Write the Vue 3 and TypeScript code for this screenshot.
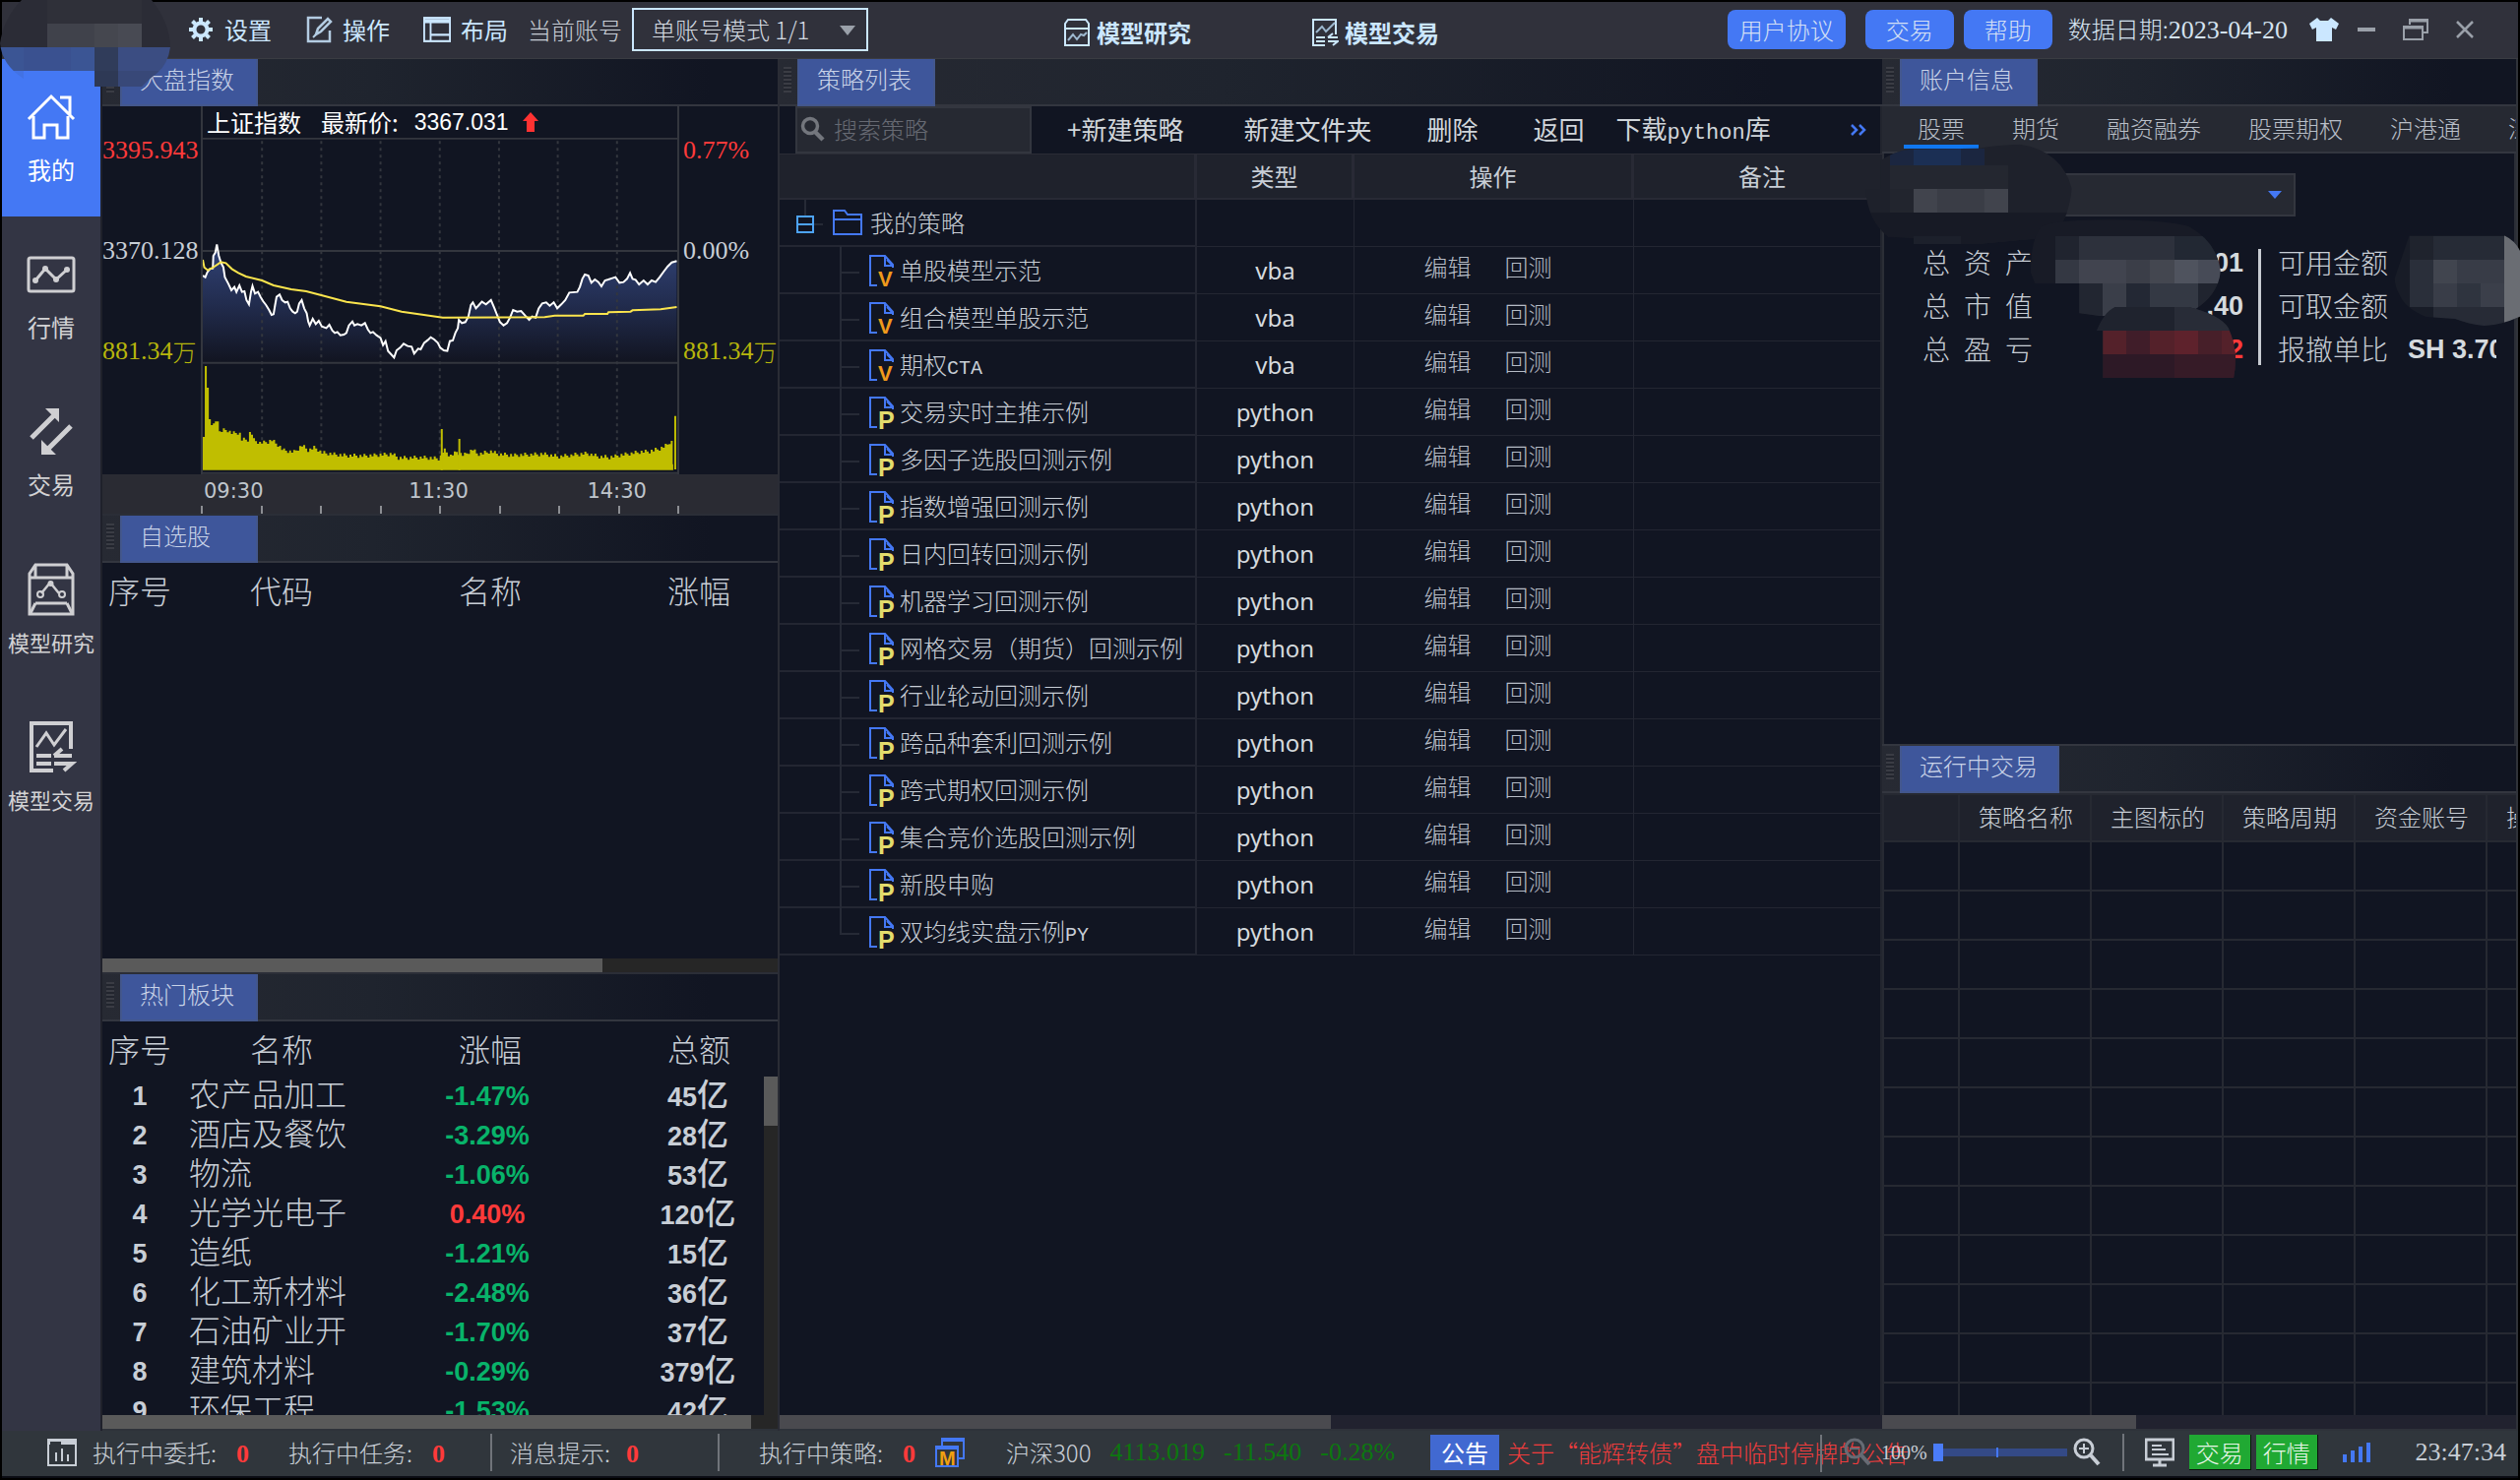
<script setup lang="ts">
import { ref } from 'vue'

interface Strategy { name: string; latin?: string; kind: 'vba' | 'python' }
interface Sector { id: number; name: string; change: string; amount: number }

const accountMode = ref('单账号模式 1/1')
const keyword = ref('')
const zoomLevel = ref(0)

const navItems = [
  { id: 'home', label: '我的' },
  { id: 'quote', label: '行情' },
  { id: 'trade', label: '交易' },
  { id: 'research', label: '模型研究' },
  { id: 'model', label: '模型交易' },
]

const strategies: Strategy[] = [
  { name: '单股模型示范', kind: 'vba' },
  { name: '组合模型单股示范', kind: 'vba' },
  { name: '期权', latin: 'CTA', kind: 'vba' },
  { name: '交易实时主推示例', kind: 'python' },
  { name: '多因子选股回测示例', kind: 'python' },
  { name: '指数增强回测示例', kind: 'python' },
  { name: '日内回转回测示例', kind: 'python' },
  { name: '机器学习回测示例', kind: 'python' },
  { name: '网格交易（期货）回测示例', kind: 'python' },
  { name: '行业轮动回测示例', kind: 'python' },
  { name: '跨品种套利回测示例', kind: 'python' },
  { name: '跨式期权回测示例', kind: 'python' },
  { name: '集合竞价选股回测示例', kind: 'python' },
  { name: '新股申购', kind: 'python' },
  { name: '双均线实盘示例', latin: 'PY', kind: 'python' },
]

const sectors: Sector[] = [
  { id: 1, name: '农产品加工', change: '-1.47%', amount: 45 },
  { id: 2, name: '酒店及餐饮', change: '-3.29%', amount: 28 },
  { id: 3, name: '物流', change: '-1.06%', amount: 53 },
  { id: 4, name: '光学光电子', change: '0.40%', amount: 120 },
  { id: 5, name: '造纸', change: '-1.21%', amount: 15 },
  { id: 6, name: '化工新材料', change: '-2.48%', amount: 36 },
  { id: 7, name: '石油矿业开', change: '-1.70%', amount: 37 },
  { id: 8, name: '建筑材料', change: '-0.29%', amount: 379 },
  { id: 9, name: '环保工程', change: '-1.53%', amount: 42 },
]

const accountTabs = ['股票', '期货', '融资融券', '股票期权', '沪港通', '深港通']
const runningColumns = ['', '策略名称', '主图标的', '策略周期', '资金账号', '操作类型']

const gridX = [522, 640, 758, 876, 994, 1111, 1229]

const pricePoints =
  '404,540 409,545 413,530 418,520 424,518 425,480 429,470 432,445 436,480 440,500 445,515 448,545 455,565 461,585 467,575 471,590 477,570 482,590 487,588 491,615 496,628 500,590 503,572 508,595 514,590 519,605 524,618 530,630 536,645 541,660 545,658 548,630 551,605 557,598 562,615 568,622 573,620 578,640 583,650 588,655 592,650 596,625 601,615 606,640 611,655 614,680 617,692 623,672 629,688 635,678 641,695 650,700 656,690 662,708 667,715 672,712 678,722 685,720 690,715 695,692 702,680 706,692 712,688 720,692 727,685 733,705 738,715 743,712 750,722 758,730 763,752 768,740 773,770 779,780 785,790 790,768 797,760 804,748 812,755 820,757 825,778 833,763 838,765 845,745 852,737 858,728 865,735 872,745 877,760 884,768 891,770 896,740 902,738 907,715 912,700 914,675 920,685 927,682 933,665 938,630 942,622 948,640 954,630 960,620 968,628 978,615 985,640 990,660 996,682 1003,692 1010,685 1016,668 1022,645 1030,650 1038,648 1046,662 1054,675 1060,665 1067,668 1073,640 1080,625 1088,622 1095,632 1103,622 1110,640 1118,628 1126,615 1134,592 1150,590 1155,575 1160,550 1165,537 1172,540 1178,562 1185,552 1192,560 1198,573 1205,555 1212,552 1220,548 1226,545 1234,562 1242,560 1249,550 1255,532 1260,550 1266,553 1273,567 1282,555 1290,567 1298,555 1306,560 1314,545 1322,528 1330,512 1338,500 1348,496'

const averagePoints =
  '404,492 407,515 414,524 424,516 440,499 450,502 462,520 475,532 490,543 522,555 545,570 580,582 610,588 640,600 690,620 758,634 800,650 882,668 1085,667 1105,662 1162,662 1165,657 1210,657 1212,652 1256,650 1260,646 1316,643 1348,636'

const volumeEnvelope: [number, number][] = [
  [404, 1032], [407, 1032], [408, 816], [411, 816], [413, 948], [416, 978], [421, 1000], [426, 985], [434, 985], [436, 1015],
  [450, 1010], [462, 1022], [475, 1018], [480, 1040], [492, 1040], [496, 1020], [500, 1022], [504, 1042], [516, 1050], [530, 1048],
  [540, 1042], [555, 1060], [562, 1072], [584, 1078], [600, 1058], [612, 1072], [625, 1064], [640, 1080], [680, 1088],
  [720, 1090], [780, 1084], [792, 1096], [840, 1095], [874, 1098], [882, 1070], [895, 1090], [908, 1078], [922, 1088],
  [940, 1070], [950, 1085], [976, 1076], [990, 1084], [1020, 1088], [1080, 1084], [1110, 1092], [1168, 1082], [1190, 1092],
  [1212, 1094], [1240, 1086], [1270, 1078], [1292, 1076], [1312, 1068], [1326, 1058], [1334, 1045], [1337, 1048],
]

function envelopeAt(x: number): number {
  for (let i = 1; i < volumeEnvelope.length; i++) {
    const [x0, y0] = volumeEnvelope[i - 1]
    const [x1, y1] = volumeEnvelope[i]
    if (x <= x1) return y0 + ((y1 - y0) * (x - x0)) / (x1 - x0)
  }
  return 1048
}

function buildVolumePath(): string {
  let d = 'M404 1133'
  for (let i = 0; i < 240; i++) {
    const x = 404 + i * 4
    if (x > 1336) break
    const wobble = x < 440 ? 0 : ((i * 7) % 5) * 3 - 6
    const y = Math.round(envelopeAt(x) + wobble)
    d += `V${y}H${x + 4}`
  }
  return d + 'V1115H1341V1133Z'
}

const volumePath = buildVolumePath()
</script>

<template>
  <div class="app">
    <header class="topbar">
      <nav class="menu">
        <button type="button" class="menu-btn">
          <svg width="28" height="28" viewBox="0 0 28 28"><circle cx="14" cy="14" r="6.5" fill="none" stroke="#cbe7ff" stroke-width="4" /><path d="M14 2v4M14 22v4M2 14h4M22 14h4M5.500 5.500l3 3M19.500 19.500l3 3M22.500 5.500l-3 3M8.500 19.500l-3 3" stroke="#cbe7ff" stroke-width="4" /></svg>
          设置
        </button>
        <button type="button" class="menu-btn">
          <svg width="28" height="28" viewBox="0 0 28 28" fill="none" stroke="#b3cce2"><path d="M17 2H3v24h22V15" stroke-width="2.500" /><path d="M11 19l2-6L23 3l3 3-10 10z" stroke-width="2.500" /><path d="M8 22l3-3" stroke-width="2" /></svg>
          操作
        </button>
        <button type="button" class="menu-btn">
          <svg width="28" height="28" viewBox="0 0 30 26" preserveAspectRatio="none" fill="none" stroke="#cbe7ff"><rect x="1" y="2" width="28" height="22" stroke-width="2" /><path d="M1 5h28" stroke-width="4" /><path d="M8 6v18M8 18h21" stroke-width="2" /></svg>
          布局
        </button>
      </nav>
      <label class="account-label" for="mode">当前账号</label>
      <div class="mode-box">
        <select id="mode" v-model="accountMode" class="mode-select">
          <option>单账号模式 1/1</option>
        </select>
        <svg class="mode-arrow" width="16" height="10" viewBox="0 0 16 10"><path d="M0 0h16L8 10z" fill="#9aa0a9" /></svg>
      </div>
      <div class="model-links">
        <a href="#research" class="model-link">
          <svg width="28" height="28" viewBox="0 0 28 28" fill="none" stroke="#cbe7ff" stroke-width="2"><path d="M2 10V5l3-4h18l3 4v5M2 10h24v17H2z" /><path d="M5 22l5-6 4 5 4-5 3 1 3-3" stroke="#9db8cf" /></svg>
          模型研究
        </a>
        <a href="#model" class="model-link">
          <svg width="28" height="28" viewBox="0 0 28 28" fill="none" stroke="#cbe7ff" stroke-width="2"><path d="M14 27H2V1h23v15" /><path d="M5 14l6-6 4 5 9-9" stroke="#9db8cf" /><path d="M5 19h9M5 23h9M17 19h10M17 19l5-4M17 23h10l-5 4" /></svg>
          模型交易
        </a>
      </div>
      <div class="top-actions">
        <button type="button" class="pill wide">用户协议</button>
        <button type="button" class="pill">交易</button>
        <button type="button" class="pill last">帮助</button>
        <span class="data-date">数据日期:<span class="num">2023-04-20</span></span>
        <button type="button" class="icon-btn shirt" aria-label="换肤">
          <svg width="30" height="26" viewBox="0 0 30 26"><path d="M8 1l3 3h8l3-3 8 6-3 6-4-2v14H7V11l-4 2-3-6z" fill="#cbe7ff" /></svg>
        </button>
        <button type="button" class="icon-btn" aria-label="最小化">
          <svg width="20" height="20" viewBox="0 0 20 20"><path d="M1 10h18" stroke="#9aa0a9" stroke-width="4" /></svg>
        </button>
        <button type="button" class="icon-btn" aria-label="还原">
          <svg width="28" height="24" viewBox="0 0 28 24" fill="none" stroke="#9aa0a9" stroke-width="2"><path d="M8 7V2h18v13h-5" /><path d="M8 3h18" stroke-width="3" /><rect x="2" y="9" width="19" height="13" /><path d="M2 10h19" stroke-width="3" /></svg>
        </button>
        <button type="button" class="icon-btn" aria-label="关闭">
          <svg width="20" height="20" viewBox="0 0 20 20"><path d="M2 2l16 16M18 2L2 18" stroke="#9aa0a9" stroke-width="2.500" /></svg>
        </button>
      </div>
    </header>

    <div class="body">
      <aside class="sidebar">
        <button v-for="item in navItems" :key="item.id" type="button" class="nav-item" :class="{ active: item.id === 'home', small: item.label.length > 2 }">
          <svg v-if="item.id === 'home'" width="52" height="52" viewBox="0 0 52 52" fill="none" stroke="#fff" stroke-width="3"><path d="M3 28L26 5l9 9M35 6h10v18M35 14l14 14" /><path d="M8 25v22h11V34h13v13h11V25" /></svg>
          <svg v-else-if="item.id === 'quote'" width="52" height="52" viewBox="0 0 52 52" fill="none" stroke="#cfcfd2"><rect x="3" y="9" width="46" height="34" rx="2" stroke-width="3" /><path d="M10 32l10-12 11 11 11-10" stroke-width="3" /><g fill="#cfcfd2" stroke="none"><circle cx="10" cy="32" r="3" /><circle cx="20" cy="20" r="3" /><circle cx="31" cy="31" r="3" /><circle cx="42" cy="21" r="3" /></g></svg>
          <svg v-else-if="item.id === 'trade'" width="52" height="52" viewBox="0 0 52 52"><path d="M6 32L32 6M20 46l26-26" stroke="#cfcfd2" stroke-width="5" /><path d="M20 2h14v14zM16 34v15h15z" fill="#cfcfd2" /></svg>
          <svg v-else-if="item.id === 'research'" width="52" height="56" viewBox="0 0 52 56" fill="none" stroke="#cfcfd2" stroke-width="3"><path d="M4 16V12l6-9h32l6 9v4M4 16h44v37H4zM10 4v11M42 4v11" /><path d="M10 42h32M10 42l-5 10M42 42l5 10" /><path d="M16 32l9-11 9 11" stroke-width="2.500" /><circle cx="15" cy="33" r="3" stroke-width="2" /><circle cx="25.500" cy="22" r="2" stroke-width="2" /><circle cx="37" cy="33" r="3" stroke-width="2" /></svg>
          <svg v-else width="52" height="56" viewBox="0 0 52 56" fill="none" stroke="#cfcfd2" stroke-width="4"><path d="M28 52H6V4h40v26" /><path d="M11 28l10-14 8 12 12-16" stroke-width="3" /><path d="M11 37h15M29 37h18M29 37l8-7M11 45h15M29 45h18l-8 7" /></svg>
          <span>{{ item.label }}</span>
        </button>
      </aside>

      <section class="column left">
        <div class="panel-head"><i class="grip"></i><h2 class="tab">大盘指数</h2></div>
        <div class="chart">
          <div class="axis"><span class="up">3395.943</span><span>3370.128</span><span class="vol">881.34<b>万</b></span></div>
          <div class="plot">
            <div class="plot-title">
              <span>上证指数</span><span>最新价:</span><span class="price">3367.031</span>
              <svg width="16" height="20" viewBox="0 0 16 20"><path d="M8 0l8 9h-4v11H4V9H0z" fill="#ff3232" /></svg>
            </div>
            <svg class="plot-svg" viewBox="404 120 945 1026" preserveAspectRatio="none">
              <defs>
                <linearGradient id="fill" gradientUnits="userSpaceOnUse" x1="0" y1="470" x2="0" y2="800">
                  <stop offset="0" stop-color="#2f4072" /><stop offset="0.500" stop-color="#212b4c" /><stop offset="1" stop-color="#121522" />
                </linearGradient>
              </defs>
              <polygon :points="`404,805 ${pricePoints} 1348,805`" fill="url(#fill)" />
              <g stroke="#33363e" stroke-width="2">
                <path v-for="x in gridX" :key="x" :d="`M${x} 130V1133`" stroke-dasharray="3 4" vector-effect="non-scaling-stroke" />
                <path d="M404 122H1349M404 465H1349M404 806H1349M404 1142H1349" vector-effect="non-scaling-stroke" />
              </g>
              <path :d="volumePath" fill="#c0be00" />
              <path d="M880 1133V1008M915 1133V1038M1345 1131V968" stroke="#c0be00" stroke-width="2" vector-effect="non-scaling-stroke" />
              <polyline :points="pricePoints" fill="none" stroke="#fff" stroke-width="2" vector-effect="non-scaling-stroke" />
              <polyline :points="averagePoints" fill="none" stroke="#fbe54d" stroke-width="2" vector-effect="non-scaling-stroke" />
            </svg>
          </div>
          <div class="axis right"><span class="up">0.77%</span><span>0.00%</span><span class="vol">881.34<b>万</b></span></div>
        </div>
        <div class="time-axis">
          <div class="time-inner">
            <div class="times"><span>09:30</span><span class="mid">11:30</span><span class="late">14:30</span></div>
            <div class="ticks"><i v-for="n in 9" :key="n"></i></div>
          </div>
        </div>

        <div class="panel-head next"><i class="grip"></i><h2 class="tab">自选股</h2></div>
        <div class="watch">
          <table class="quote-table">
            <thead><tr><th class="c1">序号</th><th class="c2">代码</th><th class="c3">名称</th><th class="c4">涨幅</th></tr></thead>
          </table>
        </div>
        <div class="hscroll gray"><i class="w74"></i></div>

        <div class="panel-head next"><i class="grip"></i><h2 class="tab">热门板块</h2></div>
        <table class="quote-table">
          <thead><tr><th class="c1">序号</th><th class="c2">名称</th><th class="c3">涨幅</th><th class="c4">总额</th></tr></thead>
        </table>
        <div class="hot">
          <table class="quote-table rows">
            <tbody>
              <tr v-for="s in sectors" :key="s.id">
                <td class="c1 digits">{{ s.id }}</td>
                <td class="c2 name">{{ s.name }}</td>
                <td class="c3 digits" :class="s.change.startsWith('-') ? 'down' : 'up'">{{ s.change }}</td>
                <td class="c4 digits">{{ s.amount }}<span class="unit">亿</span></td>
              </tr>
            </tbody>
          </table>
          <div class="vscroll"><i></i></div>
        </div>
        <div class="hscroll gray"><i class="w96"></i></div>
      </section>

      <section class="column middle">
        <div class="panel-head"><i class="grip"></i><h2 class="tab">策略列表</h2></div>
        <div class="toolbar">
          <label class="search">
            <svg width="26" height="26" viewBox="0 0 26 26" fill="none" stroke="#73767d"><circle cx="10" cy="10" r="7.500" stroke-width="3.500" /><path d="M15 16l8 8" stroke-width="4.500" /></svg>
            <input v-model="keyword" type="text" placeholder="搜索策略" aria-label="搜索策略" />
          </label>
          <div class="tools">
            <button type="button" class="t1">+新建策略</button>
            <button type="button" class="t2">新建文件夹</button>
            <button type="button" class="t3">删除</button>
            <button type="button" class="t3">返回</button>
            <button type="button" class="t4">下载<span class="code">python</span>库</button>
          </div>
          <button type="button" class="more" aria-label="更多">
            <svg width="16" height="12" viewBox="0 0 16 12" fill="none" stroke="#4478f4" stroke-width="2.500"><path d="M1 1l5 5-5 5M9 1l5 5-5 5" /></svg>
          </button>
        </div>
        <table class="strategy">
          <colgroup><col class="sc1" /><col class="sc2" /><col class="sc3" /><col /></colgroup>
          <thead><tr><th></th><th>类型</th><th>操作</th><th class="note-head">备注</th></tr></thead>
          <tbody>
            <tr>
              <td>
                <div class="root">
                  <svg width="30" height="46" viewBox="0 0 30 46" fill="none"><path d="M10 0v16M18 25h10" stroke="#262a36" stroke-width="2" /><path d="M2 17h16v16H2zM2 25h16" stroke="#4da3f5" stroke-width="2" /></svg>
                  <svg width="30" height="26" viewBox="0 0 30 26" fill="none" stroke="#4478f4" stroke-width="2"><path d="M1 25V1h11l3 4h14v20zM1 10h28" /></svg>
                  <span>我的策略</span>
                </div>
              </td>
              <td></td><td></td><td></td>
            </tr>
            <tr v-for="s in strategies" :key="s.name">
              <td>
                <div class="leaf">
                  <i class="guide"></i>
                  <svg width="28" height="34" viewBox="0 0 28 34"><path d="M9 32H2V2h15l8 9v3M17 2v10h8M19 6l5 5" fill="none" stroke="#4478f4" stroke-width="2" /><text v-if="s.kind === 'vba'" x="10" y="33" class="badge vba">V</text><text v-else x="10" y="34" class="badge py">P</text></svg>
                  <span>{{ s.name }}<span v-if="s.latin" class="latin">{{ s.latin }}</span></span>
                </div>
              </td>
              <td class="kind">{{ s.kind }}</td>
              <td class="ops"><a href="#edit">编辑</a><a href="#backtest">回测</a></td>
              <td></td>
            </tr>
          </tbody>
        </table>
        <div class="spacer"></div>
        <div class="hscroll"><i class="w50"></i></div>
      </section>

      <section class="column right-col">
        <div class="account">
          <div class="panel-head"><i class="grip"></i><h2 class="tab">账户信息</h2></div>
          <div class="sub-tabs">
            <button v-for="(t, i) in accountTabs" :key="t" type="button" :class="{ on: i === 0 }">{{ t }}</button>
          </div>
          <div class="account-body">
            <div class="account-select">
              <select aria-label="账号"><option></option></select>
              <svg width="14" height="8" viewBox="0 0 14 8"><path d="M0 0h14L7 8z" fill="#4478f4" /></svg>
            </div>
            <div class="funds">
              <dl class="first">
                <div><dt class="spread">总 资 产</dt><dd>01</dd></div>
                <div><dt class="spread">总 市 值</dt><dd>.40</dd></div>
                <div><dt class="spread">总 盈 亏</dt><dd class="up">2</dd></div>
              </dl>
              <dl class="second">
                <div><dt>可用金额</dt><dd></dd></div>
                <div><dt>可取金额</dt><dd></dd></div>
                <div><dt>报撤单比</dt><dd>SH 3.70</dd></div>
              </dl>
            </div>
          </div>
          <svg class="mask-right" viewBox="321 432 1247 720" preserveAspectRatio="none" shape-rendering="crispEdges">
            <defs>
              <clipPath id="ma"><path d="M355 490Q380 462 410 455L540 452Q580 442 620 440Q700 460 718 576Q712 660 690 705Q670 728 620 732L540 744H418V725L370 722Q330 670 327 576H355z" /></clipPath>
              <clipPath id="mb"><path d="M640 830Q640 730 660 690Q690 668 800 670Q900 672 940 690Q995 740 1000 830Q995 900 950 945L800 937L780 965L732 955V864H648z" /></clipPath>
              <clipPath id="mc"><path d="M765 1008Q780 950 800 936H940Q1000 960 1015 1000Q1035 1070 1025 1152H777V1008z" /></clipPath>
              <clipPath id="md"><path d="M1358 718H1538Q1560 735 1568 765V965Q1530 992 1500 993Q1470 988 1445 972L1390 966Q1350 940 1340 900Q1332 880 1330 850z" /></clipPath>
            </defs>
            <g clip-path="url(#ma)">
              <rect x="321" y="430" width="400" height="320" fill="#1e212b" /><rect x="321" y="648" width="400" height="110" fill="#171a25" />
              <rect x="373" y="452" width="180" height="52" fill="#1b2640" /><rect x="418" y="452" width="90" height="52" fill="#1b2f54" />
              <rect x="373" y="504" width="225" height="72" fill="#242730" /><rect x="373" y="576" width="45" height="72" fill="#22252e" />
              <rect x="418" y="576" width="180" height="72" fill="#41444d" /><rect x="463" y="576" width="90" height="72" fill="#3a3d46" /><rect x="418" y="720" width="90" height="24" fill="#1c202b" />
            </g>
            <g clip-path="url(#mb)">
              <rect x="640" y="660" width="370" height="310" fill="#181b26" /><rect x="687" y="720" width="45" height="72" fill="#20242f" />
              <rect x="732" y="720" width="180" height="72" fill="#2d313c" /><rect x="912" y="720" width="90" height="72" fill="#222833" />
              <rect x="687" y="792" width="45" height="72" fill="#343843" /><rect x="732" y="792" width="90" height="72" fill="#41444f" /><rect x="822" y="792" width="45" height="72" fill="#3b3e48" />
              <rect x="867" y="792" width="45" height="72" fill="#444750" /><rect x="912" y="792" width="45" height="72" fill="#4f535e" /><rect x="957" y="792" width="45" height="72" fill="#474b57" />
              <rect x="732" y="864" width="45" height="100" fill="#222631" /><rect x="777" y="864" width="45" height="100" fill="#3a3e49" /><rect x="822" y="864" width="45" height="100" fill="#232834" /><rect x="867" y="864" width="90" height="100" fill="#343944" /><rect x="957" y="864" width="45" height="100" fill="#20242f" />
            </g>
            <g clip-path="url(#mc)">
              <rect x="760" y="930" width="280" height="230" fill="#1f232e" /><rect x="912" y="936" width="130" height="72" fill="#282c37" />
              <rect x="777" y="1008" width="260" height="72" fill="#54212a" /><rect x="822" y="1008" width="45" height="72" fill="#401d29" /><rect x="912" y="1008" width="45" height="72" fill="#5e222c" /><rect x="957" y="1008" width="45" height="72" fill="#471f29" />
              <rect x="777" y="1080" width="260" height="72" fill="#2d1926" /><rect x="912" y="1080" width="130" height="72" fill="#361b27" />
            </g>
            <g clip-path="url(#md)">
              <rect x="1325" y="715" width="250" height="290" fill="#181c27" /><rect x="1358" y="720" width="46" height="72" fill="#1f232d" /><rect x="1404" y="720" width="134" height="72" fill="#262b36" />
              <rect x="1358" y="792" width="46" height="144" fill="#2a2f3a" /><rect x="1404" y="792" width="45" height="72" fill="#41454f" /><rect x="1449" y="792" width="89" height="72" fill="#383c47" />
              <rect x="1404" y="864" width="45" height="72" fill="#393d48" /><rect x="1449" y="864" width="45" height="72" fill="#2f343f" /><rect x="1494" y="864" width="44" height="72" fill="#3b3f4a" />
              <rect x="1404" y="936" width="134" height="60" fill="#272b36" /><rect x="1538" y="715" width="30" height="280" fill="#6a6d73" />
            </g>
          </svg>
        </div>

        <div class="running">
          <div class="panel-head"><i class="grip"></i><h2 class="tab wide-tab">运行中交易</h2></div>
          <div class="running-body">
            <table class="running-table">
              <thead><tr><th v-for="(c, i) in runningColumns" :key="c" :class="{ first: i === 0 }">{{ c }}</th></tr></thead>
              <tbody><tr v-for="r in 12" :key="r"><td v-for="c in 6" :key="c"></td></tr></tbody>
            </table>
          </div>
          <div class="hscroll"><i class="w40"></i></div>
        </div>
      </section>
    </div>

    <footer class="status">
      <div class="status-left">
        <svg width="30" height="28" viewBox="0 0 30 28"><path d="M1 1h28v26H1z" fill="none" stroke="#c8ced6" stroke-width="2" /><path d="M0 0h30v6H14V3H3v3H0z" fill="#c8ced6" /><path d="M9 23v-9M15 23V10M21 23v-7" stroke="#c8ced6" stroke-width="2" /></svg>
        <span class="stat s1">执行中委托:<b>0</b></span>
        <span class="stat s2">执行中任务:<b>0</b></span>
        <i class="bar b1"></i>
        <span class="stat s3">消息提示:<b>0</b></span>
        <i class="bar b2"></i>
        <span class="stat s2">执行中策略:<b>0</b></span>
        <svg class="m-icon" width="30" height="30" viewBox="0 0 30 30"><path d="M7 1h22v20h-5M7 1v8" fill="none" stroke="#4478f4" stroke-width="2" /><path d="M6 0h24v4H6z" fill="#4478f4" /><rect x="1" y="9" width="22" height="20" fill="#30363c" stroke="#4478f4" stroke-width="2" /><path d="M0 8h24v4H0z" fill="#4478f4" /><text x="4" y="28" class="m-text">M</text></svg>
        <span class="index">沪深300</span>
        <span class="num green">4113.019</span><span class="num green">-11.540</span><span class="num green">-0.28%</span>
        <button type="button" class="notice-btn">公告</button>
      </div>
      <a href="#notice" class="notice">关于“能辉转债”盘中临时停牌的公告</a>
      <div class="status-right">
        <svg width="28" height="30" viewBox="0 0 28 30" fill="none" stroke="#666b74"><circle cx="11" cy="11" r="9" stroke-width="3" /><path d="M6 11h10" stroke-width="2" /><path d="M18 18l8 9" stroke-width="4" /></svg>
        <span class="percent">100%</span>
        <input v-model="zoomLevel" class="slider" type="range" min="0" max="100" aria-label="缩放" />
        <svg width="28" height="30" viewBox="0 0 28 30" fill="none" stroke="#c8ced6"><circle cx="11" cy="11" r="9" stroke-width="3" /><path d="M6 11h10M11 6v10" stroke-width="2" /><path d="M18 18l8 9" stroke-width="4" /></svg>
        <i class="bar b3"></i>
        <svg class="monitor" width="30" height="30" viewBox="0 0 30 30" fill="none" stroke="#c8ced6"><rect x="1" y="2" width="28" height="20" stroke-width="3" /><path d="M7 8h10M7 12h14M7 17h17" stroke-width="2" /><path d="M15 22v6M8 28h14" stroke-width="3" /></svg>
        <button type="button" class="green-btn">交易</button>
        <button type="button" class="green-btn">行情</button>
        <svg class="signal" width="28" height="22" viewBox="0 0 28 22"><path d="M2 21v-8M10 21V9M18 21V5M26 21V1" stroke="#4478f4" stroke-width="4" /></svg>
        <time class="num clock">23:47:34</time>
      </div>
    </footer>

    <svg class="mask-top" width="176" height="88" viewBox="0 0 176 88" aria-hidden="true">
      <defs><clipPath id="mt"><path d="M22 0H154Q172 22 173 48Q171 64 160 74L150 82L144 88H96V72H24V80Q2 66 0 44Q4 18 22 0z" /></clipPath></defs>
      <g clip-path="url(#mt)" shape-rendering="crispEdges">
        <rect width="176" height="48" fill="#2b2c36" /><rect x="48" width="96" height="24" fill="#2f3039" />
        <rect x="48" y="24" width="48" height="24" fill="#40424b" /><rect x="96" y="24" width="24" height="24" fill="#45474f" /><rect x="120" y="24" width="24" height="24" fill="#484a53" />
        <rect y="48" width="96" height="24" fill="#3b5594" /><rect x="24" y="48" width="48" height="24" fill="#3a5190" /><rect x="0" y="72" width="24" height="16" fill="#4272e4" />
        <rect x="96" y="48" width="24" height="24" fill="#303c5a" /><rect x="120" y="48" width="56" height="24" fill="#3b4d82" />
        <rect x="96" y="72" width="24" height="16" fill="#2e3955" /><rect x="120" y="72" width="56" height="16" fill="#384878" />
      </g>
    </svg>
  </div>
</template>

<style>
body { background: #000; }
</style>

<style scoped>
* { box-sizing: border-box; }
.app { position: relative; display: flex; flex-direction: column; height: 100vh; min-height: 1200px; padding: 2px 2px 4px; overflow: hidden; background: #0b0d15; font-family: "Noto Sans CJK SC", sans-serif; font-size: 24px; font-weight: 300; line-height: 32px; color: #c8ced6; white-space: nowrap; box-shadow: inset 0 0 0 2px #000; }
button { padding: 0; border: 0; background: none; color: inherit; font: inherit; cursor: pointer; }
a { color: inherit; text-decoration: none; }
h2, dl, dd { margin: 0; font: inherit; }
i { display: block; flex: none; }
svg { display: block; flex: none; }
.num { font-family: "Liberation Serif", serif; font-size: 26px; }

.topbar { display: flex; align-items: center; flex: none; height: 58px; padding: 0 44px 2px 188px; background: #30313b; border-bottom: 1px solid #3a3c42; }
.menu { display: flex; gap: 34px; }
.menu-btn { display: flex; align-items: center; gap: 10px; color: #cbe7ff; font-weight: 400; }
.account-label { margin-left: 20px; }
.mode-box { position: relative; margin-left: 10px; }
.mode-select { display: block; width: 240px; height: 44px; padding: 0 18px; appearance: none; border: 2px solid #cbe7ff; border-radius: 0; background: transparent; color: #d5dbe2; font: inherit; }
.mode-arrow { position: absolute; top: 18px; right: 13px; pointer-events: none; }
.model-links { display: flex; gap: 122px; margin-left: 198px; padding-top: 6px; }
.model-link { display: flex; align-items: center; gap: 6px; color: #cbe7ff; font-weight: 700; }
.top-actions { display: flex; align-items: center; margin-left: auto; }
.pill { width: 90px; height: 40px; margin-right: 10px; border-radius: 8px; background: #4478f4; color: #d5e0f5; line-height: 36px; }
.pill.wide { width: 120px; margin-right: 20px; }
.pill.last { margin-right: 16px; }
.data-date { margin-right: 4px; color: #d5e3f0; }
.icon-btn { margin-left: 26px; }
.icon-btn.shirt { margin: 0 -8px 0 18px; }

.body { display: grid; flex: 1; grid-template-columns: 100px 690fr 1120fr 646fr; min-height: 0; background: #111522; }
.sidebar { background: #333544; }
.nav-item { display: flex; flex-direction: column; align-items: center; width: 100%; height: 160px; padding-top: 33px; color: #d2d2d4; font-weight: 400; }
.nav-item span { margin-top: 11px; }
.nav-item.small { padding-top: 31px; font-size: 22px; }
.nav-item.small span { margin-top: 9px; }
.nav-item.active { background: #4478f4; color: #fff; }

.column { position: relative; display: flex; flex-direction: column; min-width: 0; min-height: 0; }
.left { padding: 0 2px; box-shadow: inset 2px 0 #1f212b, inset -2px 0 #2a2c35; }
.panel-head { display: flex; flex: none; height: 48px; padding-left: 4px; border-bottom: 2px solid #33363f; background: linear-gradient(90deg, #272a33 0, #1f242e 40%, #111522 90%); }
.panel-head.next { height: 50px; border-top: 2px solid #2b2e37; }
.grip { width: 8px; height: 26px; margin: 8px 6px 0 0; background: repeating-linear-gradient(180deg, #3a3c44 0 2px, #22252e 2px 4px); }
.tab { width: 140px; height: 48px; padding-left: 18px; border: 2px solid #43578d; border-width: 0 2px 2px; background: #3e569b; line-height: 40px; color: #c9d3e8; }

.chart { display: flex; flex: none; height: 374px; }
.axis { display: flex; flex-direction: column; gap: 72px; width: 100px; padding-top: 30px; font: 26px/30px "Liberation Serif", serif; color: #c8ced6; }
.axis span { display: flex; height: 30px; }
.axis b { font: 300 24px/30px "Noto Sans CJK SC", sans-serif; }
.axis.right { padding-left: 4px; }
.axis .vol { color: #b7b60c; }
.axis .up { color: #ff3a3a; }
.plot { display: flex; flex: 1; flex-direction: column; min-width: 0; border: solid #33363e; border-width: 0 2px; }
.plot-title { display: flex; align-items: center; height: 32px; padding-left: 4px; color: #fff; font-weight: 400; }
.plot-title span { margin-right: 20px; }
.plot-title span.price { margin: 0 14px 0 -4px; font: 23px/32px "Liberation Sans", sans-serif; }
.plot-svg { width: 100%; height: 342px; }
.time-axis { flex: none; height: 40px; padding: 0 100px; background: #2a2b33; }
.time-inner { display: flex; flex-direction: column; height: 40px; }
.times { display: grid; grid-template-columns: repeat(8, 1fr); height: 32px; font: 21px/34px "DejaVu Sans", sans-serif; color: #bfc5cc; }
.times span { padding-left: 3px; }
.times .mid { grid-column: 4 / 6; padding: 0 6px 0 0; text-align: center; }
.times .late { grid-column: 7 / 9; padding: 0 6px 0 0; text-align: center; }
.ticks { display: flex; justify-content: space-between; }
.ticks i { width: 2px; height: 8px; background: #8c8e93; }

.watch { flex: 1; min-height: 0; }
.quote-table { flex: none; width: 100%; table-layout: fixed; border-collapse: collapse; font-size: 32px; line-height: 40px; }
.quote-table th { height: 56px; padding: 0 0 3px; font-weight: 300; }
.quote-table .c1 { width: 76px; text-align: center; }
.quote-table .c2 { width: 212px; text-align: center; }
.quote-table .c3 { width: 212px; text-align: center; }
.quote-table .c4 { text-align: center; }
.quote-table th.c4 { padding-left: 26px; }
.quote-table.rows { font-size: 30px; line-height: 30px; }
.quote-table.rows td { height: 40px; padding: 0; }
.quote-table.rows .name { padding: 0 0 4px 12px; font-size: 32px; text-align: left; line-height: 32px; vertical-align: top; }
.quote-table .digits { font: 700 27px/32px "Liberation Sans", sans-serif; }
.quote-table.rows .c3 { padding-right: 6px; }
.quote-table.rows .c4 { padding-left: 38px; }
.quote-table .unit { font: 500 32px/24px "Noto Sans CJK SC", sans-serif; }
.quote-table .down { color: #08b36a; }
.quote-table .up { color: #ff3a3a; }
.hot { display: flex; flex: none; height: 344px; overflow: hidden; }
.hot .quote-table { flex: 1; width: auto; min-width: 0; align-self: flex-start; }
.vscroll { flex: none; width: 14px; background: #262626; }
.vscroll i { height: 50px; background: #5a5a5a; }
.hscroll { flex: none; height: 16px; border-bottom: 2px solid #2e323a; background: #21222f; }
.hscroll i { height: 14px; background: #4a4a4f; }
.hscroll.gray { background: #262626; }
.hscroll.gray i { background: #5a5a5a; }
.watch + .hscroll { height: 14px; border-bottom: 0; }
.w74 { width: 74%; }
.w96 { width: 96%; }
.w50 { width: 50%; }
.w40 { width: 40%; }

.middle { box-shadow: inset -2px 0 #22252e; }
.toolbar { display: flex; align-items: center; flex: none; height: 49px; padding-left: 16px; border-bottom: 1px solid #2a2c35; }
.search { display: flex; align-items: center; gap: 8px; width: 240px; height: 48px; padding: 0 0 2px 3px; border: 2px solid #33363f; background: #262932; }
.search input { width: 180px; padding: 0; border: 0; outline: 0; background: transparent; color: inherit; font: inherit; }
.search input::placeholder { color: #666972; opacity: 1; }
.tools { display: flex; margin-left: 36px; padding-bottom: 3px; font-size: 26px; font-weight: 400; color: #d0d5da; }
.tools .t2 { margin-left: 61px; }
.tools .t3 { margin-left: 56px; }
.tools .t4 { margin-left: 32px; }
.code { font: 22px "Liberation Mono", monospace; }
.more { margin: 0 16px 0 auto; }

.strategy { flex: none; width: 100%; table-layout: fixed; border-collapse: separate; border-spacing: 0; }
.sc1 { width: 424px; }
.sc2 { width: 160px; }
.sc3 { width: 284px; }
.strategy th { height: 46px; padding: 0; border: solid #282a35; border-width: 0 3px 2px 0; background: #1f222c; font-weight: 400; text-align: center; }
.strategy th.note-head { padding-left: 8px; }
.strategy td { height: 48px; padding: 0; border: solid #232632; border-width: 0 1px 1px 0; text-align: center; }
.strategy td:first-child { border-width: 0 2px 2px 0; }
.strategy th:last-child, .strategy td:last-child { border-right-width: 0; }
.root { display: flex; align-items: center; height: 46px; padding-left: 16px; }
.root svg { margin-right: 8px; }
.leaf { display: flex; align-items: center; height: 46px; }
.leaf svg { margin: 2px 4px 0 0; }
.guide { position: relative; width: 90px; height: 48px; }
.guide::before { position: absolute; top: 0; left: 61px; width: 2px; height: 48px; background: #262a36; content: ""; }
.guide::after { position: absolute; top: 26px; left: 63px; width: 18px; height: 2px; background: #262a36; content: ""; }
tr:last-child .guide::before { height: 28px; }
.latin { font: 20px "Liberation Mono", monospace; }
.badge { font: 700 22px "Liberation Sans", sans-serif; }
.badge.vba { fill: #f09a1c; }
.badge.py { font-size: 25px; fill: #e3dc6c; }
.strategy .kind { font: 400 24px/32px "Noto Sans", sans-serif; color: #d5dade; }
.strategy .ops { padding: 0 12px 8px 0; color: #b6bcc6; }
.ops a + a { margin-left: 34px; }
.spacer { flex: 1; }

.account, .running { position: relative; display: flex; flex: 1; flex-direction: column; min-height: 0; border-right: 2px solid #30333a; }
.account { border-bottom: 2px solid #33363f; }
.tab.wide-tab { width: 162px; }
.sub-tabs { display: flex; flex: none; height: 48px; padding-left: 12px; overflow: hidden; border-bottom: 2px solid #33363f; background: #262932; }
.sub-tabs button { position: relative; flex: none; padding: 0 24px 2px; color: #b9bfc8; }
.sub-tabs .on::after { position: absolute; right: 10px; bottom: 3px; left: 10px; height: 4px; background: #1077f0; content: ""; }
.account-body { flex: 1; overflow: hidden; padding: 20px 18px 0 16px; border: solid #2b2e36; border-width: 0 2px; }
.account-select { position: relative; width: 402px; }
.account-select select { display: block; width: 100%; height: 44px; appearance: none; border: 2px solid #33363f; border-radius: 0; background: #262932; }
.account-select svg { position: absolute; top: 18px; right: 14px; pointer-events: none; }
.funds { display: flex; margin-top: 24px; font-size: 28px; line-height: 44px; }
.funds dl > div { display: flex; justify-content: space-between; height: 44px; }
.funds .first { position: relative; flex: none; width: 367px; padding-left: 23px; }
.funds .first > div { width: 326px; }
.funds .first::after { position: absolute; top: 9px; right: 0; width: 3px; height: 118px; background: #c8ccd2; content: ""; }
.funds .second { flex: none; margin-left: 17px; }
.funds .second > div { justify-content: flex-start; width: 222px; overflow: hidden; }
.funds .second dd { margin-left: 20px; }
.funds .spread { width: 112px; text-align-last: justify; }
.funds dd { font: 700 27px/47px "Liberation Sans", sans-serif; color: #d5dade; }
.funds dd.up { color: #ff3a3a; }
.mask-right { position: absolute; top: 84px; left: -20px; width: calc(100% + 24px); height: 240px; pointer-events: none; }
.mask-top { position: absolute; top: 0; left: 0; pointer-events: none; }

.running-body { flex: 1; min-height: 0; overflow: hidden; border: solid #262932; border-width: 2px 0 0 2px; }
.running-table { width: 747px; table-layout: fixed; border-collapse: separate; border-spacing: 0; }
.running-table th, .running-table td { height: 50px; padding: 0; border: solid #262932; border-width: 0 2px 2px 0; font-weight: 300; text-align: center; }
.running-table th { width: 134px; height: 48px; padding: 0 0 2px 2px; background: #1f222c; }
.running-table th.first { width: 77px; }

.status { display: flex; align-items: center; flex: none; height: 46px; background: #30363c; }
.status-left, .status-right { display: flex; align-items: center; flex: none; height: 46px; padding-bottom: 2px; }
.status-left { padding-left: 46px; }
.stat b { margin-left: 20px; font: 700 26px "Liberation Serif", serif; color: #ff3a3a; }
.stat.s1 { margin-left: 16px; }
.stat.s2 { margin-left: 40px; }
.stat.s3 { margin-left: 18px; }
.bar { width: 2px; height: 38px; background: #70747a; }
.bar.b1 { margin-left: 46px; }
.bar.b2 { margin-left: 80px; }
.bar.b3 { margin-left: 22px; }
.stat.s3 b { margin-left: 16px; }
.m-icon { margin: 0 42px 0 20px; }
.m-text { font: 700 20px "Liberation Sans", sans-serif; fill: #f0a010; }
.green { margin-left: 19px; color: #0c780f; }
.notice-btn { width: 70px; height: 36px; margin-left: 36px; background: #4169d1; color: #fff; font-weight: 400; line-height: 34px; }
.notice { flex: 1 1 0; width: 0; margin-left: 8px; padding-bottom: 2px; color: #f03c3c; }
.status-right { position: relative; width: 709px; padding-left: 24px; }
.status-right::before { position: absolute; top: 4px; left: 0; width: 2px; height: 38px; background: #70747a; content: ""; }
.percent { margin: 0 6px 0 10px; font: 20px/32px "Liberation Serif", serif; }
.slider { width: 136px; height: 18px; margin: 0 6px 0 0; appearance: none; background: linear-gradient(#4478f4, #4478f4) 64px 4px / 2px 10px no-repeat, linear-gradient(#344a86, #344a86) 0 5px / 100% 8px no-repeat; }
.slider::-webkit-slider-thumb { width: 10px; height: 18px; appearance: none; border-radius: 0; background: #4a7cf8; }
.monitor { margin: 0 15px 0 21px; }
.green-btn { width: 63px; height: 36px; margin-right: 5px; border: solid #0a120c; border-width: 0 1px 1px 0; background: #20a933; color: #eaf6ea; line-height: 32px; }
.signal { margin-left: 20px; }
.clock { margin: 0 12px 0 auto; }
</style>
